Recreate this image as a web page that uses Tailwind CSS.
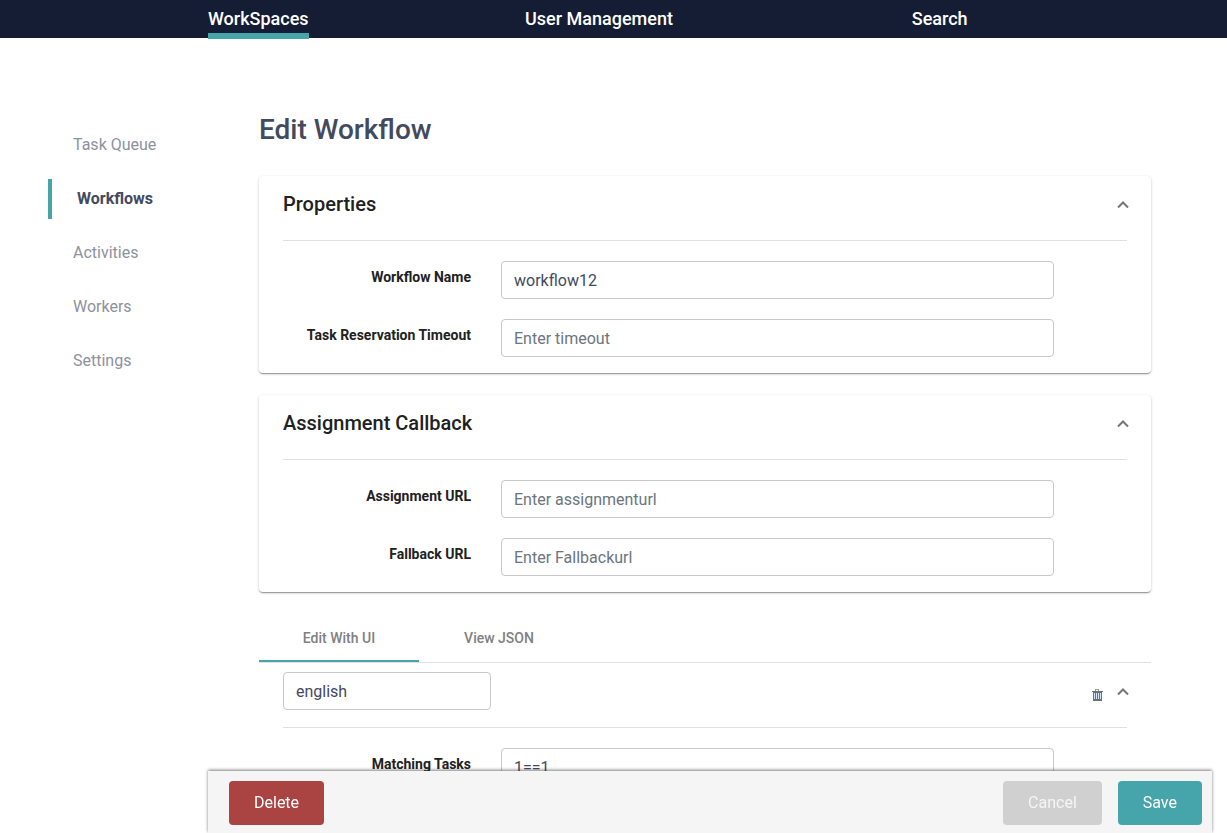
<!DOCTYPE html>
<html lang="en">
<head>
<meta charset="utf-8">
<meta name="viewport" content="width=device-width, initial-scale=1">
<title>Edit Workflow</title>
<script src="https://cdn.jsdelivr.net/npm/@tailwindcss/browser@4"></script>
</head>
<body class="h-screen overflow-hidden bg-white font-['Roboto',sans-serif] text-base text-[#212121]">
<header class="h-[38px] bg-[#151d35] pl-[88px] pr-[117px]">
  <nav class="grid grid-cols-3 justify-items-center text-lg leading-[38px] font-medium text-white">
    <a href="#" class="h-[39px] border-b-6 border-[#45a5aa]" aria-current="page">WorkSpaces</a>
    <a href="#" class="h-[39px]">User Management</a>
    <a href="#" class="h-[39px]">Search</a>
  </nav>
</header>

<div class="flex pr-[76px] pl-12">
  <aside class="w-[211px] shrink-0 pt-[87px]">
    <nav class="flex flex-col gap-3.5 leading-10 text-[#8d929d]">
      <a href="#" class="pl-[25px]">Task Queue</a>
      <a href="#" class="border-l-4 border-[#45a5aa] pl-[25px] font-bold text-[#434a5e]" aria-current="page">Workflows</a>
      <a href="#" class="pl-[25px]">Activities</a>
      <a href="#" class="pl-[25px]">Workers</a>
      <a href="#" class="pl-[25px]">Settings</a>
    </nav>
  </aside>

  <main class="flex min-w-0 flex-1 flex-col gap-[22px] pt-[74px]">
    <h1 class="mb-1.5 text-[28px] leading-9 font-medium text-[#434a5e]">Edit Workflow</h1>

    <section class="rounded bg-white px-6 pb-4 shadow-[0_2px_1px_-1px_rgba(0,0,0,0.2),0_1px_1px_0_rgba(0,0,0,0.14),0_1px_3px_0_rgba(0,0,0,0.2)]">
      <div class="flex h-[65px] items-center justify-between border-b border-[#e0e0e0] pb-2">
        <h2 class="text-xl font-medium">Properties</h2>
        <button type="button" aria-label="Collapse properties" class="-mr-0.5 pt-0.5 text-[#757575]"><svg class="h-3 w-3" viewBox="0 0 12 12" fill="none" stroke="currentColor" stroke-width="2"><path d="M1 8.5 6 3.5l5 5"/></svg></button>
      </div>
      <div class="flex flex-col gap-5 pt-5">
        <div class="flex gap-[30px] pr-[73px]">
          <label for="name" class="w-[188px] pt-1.5 text-right text-sm font-bold">Workflow Name</label>
          <input id="name" type="text" value="workflow12" class="h-[38px] min-w-0 flex-1 rounded border border-[#c8c8c8] px-3 text-[#434a5e]">
        </div>
        <div class="flex gap-[30px] pr-[73px]">
          <label for="timeout" class="w-[188px] pt-1.5 text-right text-sm font-bold">Task Reservation Timeout</label>
          <input id="timeout" type="text" placeholder="Enter timeout" class="h-[38px] min-w-0 flex-1 rounded border border-[#c8c8c8] px-3 text-[#434a5e] placeholder:text-[#6c757d]">
        </div>
      </div>
    </section>

    <section class="rounded bg-white px-6 pb-4 shadow-[0_2px_1px_-1px_rgba(0,0,0,0.2),0_1px_1px_0_rgba(0,0,0,0.14),0_1px_3px_0_rgba(0,0,0,0.2)]">
      <div class="flex h-[65px] items-center justify-between border-b border-[#e0e0e0] pb-2">
        <h2 class="text-xl font-medium">Assignment Callback</h2>
        <button type="button" aria-label="Collapse assignment callback" class="-mr-0.5 pt-0.5 text-[#757575]"><svg class="h-3 w-3" viewBox="0 0 12 12" fill="none" stroke="currentColor" stroke-width="2"><path d="M1 8.5 6 3.5l5 5"/></svg></button>
      </div>
      <div class="flex flex-col gap-5 pt-5">
        <div class="flex gap-[30px] pr-[73px]">
          <label for="assign" class="w-[188px] pt-1.5 text-right text-sm font-bold">Assignment URL</label>
          <input id="assign" type="text" placeholder="Enter assignmenturl" class="h-[38px] min-w-0 flex-1 rounded border border-[#c8c8c8] px-3 text-[#434a5e] placeholder:text-[#6c757d]">
        </div>
        <div class="flex gap-[30px] pr-[73px]">
          <label for="fallback" class="w-[188px] pt-1.5 text-right text-sm font-bold">Fallback URL</label>
          <input id="fallback" type="text" placeholder="Enter Fallbackurl" class="h-[38px] min-w-0 flex-1 rounded border border-[#c8c8c8] px-3 text-[#434a5e] placeholder:text-[#6c757d]">
        </div>
      </div>
    </section>

    <section>
      <div role="tablist" class="flex h-[49px] border-b border-[#e0e0e0] text-sm font-medium text-[#808080]">
        <button type="button" role="tab" aria-selected="true" class="h-12 w-40 border-b-2 border-[#45a5aa] pt-0.5">Edit With UI</button>
        <button type="button" role="tab" aria-selected="false" class="h-12 w-40 border-b-2 border-transparent pt-0.5">View JSON</button>
      </div>
      <div class="px-6">
        <div class="flex h-[65px] items-center border-b border-[#e0e0e0] pb-2">
          <input type="text" aria-label="Filter name" value="english" class="h-[38px] w-52 rounded border border-[#c8c8c8] px-3 text-[#434a5e]">
          <button type="button" aria-label="Delete filter" class="mr-3.5 ml-auto pt-2 text-[#707070]"><svg class="h-[14px] w-3" viewBox="0 0 12 14" shape-rendering="crispEdges"><path fill="currentColor" fill-opacity=".7" d="M4 1h4v2H7V2H5v1H4z"/><path fill="currentColor" d="M1 3h11v1h-1v9H2V4H1z"/><path fill="#d5ebf8" d="M3 5h1v6H3zM5 5h1v6H5zM7 5h1v6H7zM9 5h1v6H9z"/></svg></button>
          <button type="button" aria-label="Collapse filter" class="-mr-0.5 pt-0.5 text-[#757575]"><svg class="h-3 w-3" viewBox="0 0 12 12" fill="none" stroke="currentColor" stroke-width="2"><path d="M1 8.5 6 3.5l5 5"/></svg></button>
        </div>
        <div class="flex gap-[30px] pt-5 pr-[73px]">
          <label for="match" class="w-[188px] pt-1.5 text-right text-sm font-bold">Matching Tasks</label>
          <input id="match" type="text" value="1==1" class="h-[38px] min-w-0 flex-1 rounded border border-[#c8c8c8] px-3 text-[#434a5e]">
        </div>
      </div>
    </section>
  </main>
</div>

<footer class="fixed right-[15px] bottom-0 left-52 flex h-[62px] items-start gap-4 bg-[#f5f5f5] px-2.5 pt-2.5 shadow-[0_-1px_3px_0_rgba(0,0,0,0.5)]">
  <button type="button" class="mr-auto ml-[11px] h-11 rounded bg-[#a94442] px-[25px] text-white">Delete</button>
  <button type="button" class="h-11 rounded bg-[#d0d0d0] px-[25px] text-[#f5f5f5]">Cancel</button>
  <button type="button" class="h-11 rounded bg-[#45a5aa] px-[25px] text-white">Save</button>
</footer>
</body>
</html>
